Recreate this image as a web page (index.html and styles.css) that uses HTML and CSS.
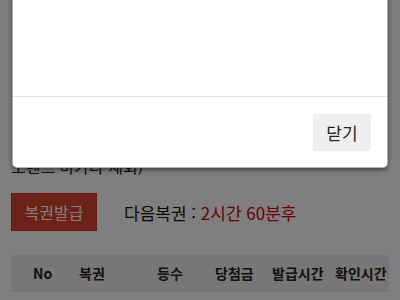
FILE: index.html
```html
<!DOCTYPE html>
<html lang="ko">
<head>
<meta charset="utf-8">
<link rel="stylesheet" href="styles.css">
</head>
<body>
<div class="page">
  <p class="note">오렌드 마가다 재회)</p>
  <div class="actions">
    <button class="issue">복권발급</button>
    <span class="next">다음복권 : <em>2시간 60분후</em></span>
  </div>
  <div class="thead">
    <span>No</span><span>복권</span><span>등수</span><span>당첨금</span><span>발급시간</span><span>확인시간</span>
  </div>
</div>
<div class="overlay"></div>
<div class="modal">
  <div class="modal-body"></div>
  <div class="modal-foot">
    <button class="close">닫기</button>
  </div>
</div>
</body>
</html>
```

FILE: styles.css
```css
* { box-sizing: border-box; }
html, body { margin: 0; padding: 0; }
body {
  width: 400px;
  height: 300px;
  overflow: hidden;
  background: #fff;
  font-family: "Noto Sans CJK KR", "Noto Sans", sans-serif;
  color: #333;
}
.page {
  padding: 0 11px 0 11px;
}
.note {
  margin: 0;
  padding-top: 155px;
  font-size: 16px;
  line-height: 22px;
  color: #222;
}
.actions {
  display: flex;
  align-items: center;
  gap: 27px;
  margin-top: 16px;
}
.issue {
  width: 86px;
  height: 38px;
  border: 1px solid #c23a1a;
  background: #d9452a;
  color: #fff;
  font-family: inherit;
  font-size: 16px;
  padding: 0;
}
.next {
  font-size: 17px;
  color: #111;
}
.next em {
  font-style: normal;
  color: #e00000;
}
.thead {
  display: grid;
  grid-template-columns: 46px 78px 58px 57px 63px 1fr;
  align-items: center;
  margin-top: 24px;
  height: 37px;
  padding-left: 22px;
  background: #eeeeee;
  border-bottom: 1px solid #e2e2e2;
  font-weight: 700;
  font-size: 14px;
  color: #222;
}
.overlay {
  position: fixed;
  inset: 0;
  background: rgba(0, 0, 0, 0.5);
}
.modal {
  position: fixed;
  left: 12px;
  right: 12px;
  top: -40px;
  background: #fff;
  border-radius: 5px;
  box-shadow: 0 2px 5px rgba(0, 0, 0, 0.5);
  border: 1px solid rgba(0,0,0,0.3);
}
.modal-body {
  height: 136px;
  border-bottom: 1px solid #dedede;
}
.modal-foot {
  display: flex;
  justify-content: flex-end;
  padding: 17px 16px 16px;
}
.close {
  width: 58px;
  height: 37px;
  border: none;
  background: #efefef;
  color: #222;
  font-family: inherit;
  font-size: 17px;
  padding: 0;
}
```
